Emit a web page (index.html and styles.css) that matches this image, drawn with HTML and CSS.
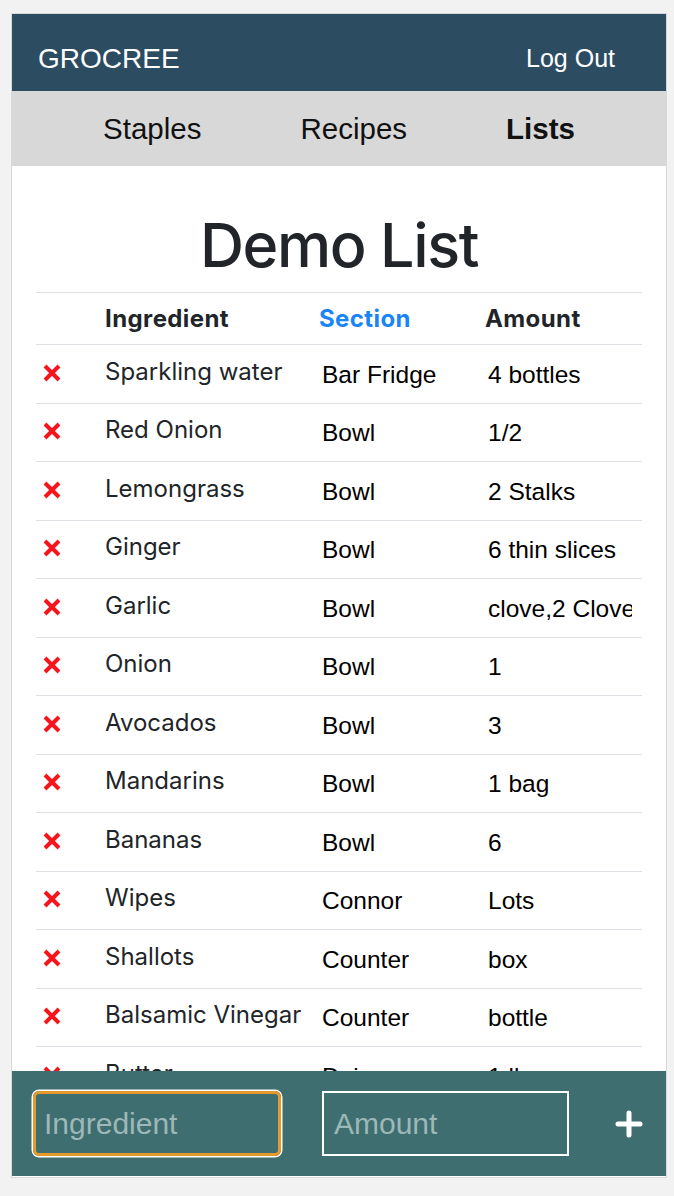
FILE: index.html
```html
<!DOCTYPE html>
<html lang="en">
<head>
<meta charset="utf-8">
<title>Grocree - Demo List</title>
<link rel="stylesheet" href="styles.css">
</head>
<body>
<div class="app">
  <header class="topbar">
    <span class="brand">GROCREE</span>
    <span class="logout">Log Out</span>
  </header>
  <nav class="tabs">
    <span class="tab">Staples</span>
    <span class="tab">Recipes</span>
    <span class="tab active">Lists</span>
  </nav>
  <main class="content">
    <h1 class="title">Demo List</h1>
    <table class="list">
      <colgroup>
        <col class="c-del"><col class="c-ing"><col class="c-sec"><col class="c-amt">
      </colgroup>
      <thead>
        <tr><th></th><th>Ingredient</th><th class="sorted">Section</th><th>Amount</th></tr>
      </thead>
      <tbody id="rows"></tbody>
    </table>
  </main>
  <footer class="addbar">
    <input class="field focused" type="text" placeholder="Ingredient">
    <input class="field" type="text" placeholder="Amount">
    <svg class="plus" width="28" height="28" viewBox="0 0 28 28"><path d="M14 3V25M3 14H25" stroke="#fff" stroke-width="5" stroke-linecap="round" fill="none"/></svg>
  </footer>
</div>
<script src="app.js"></script>
</body>
</html>
```
FILE: app.js
```js
const items = [
  ["Sparkling water", "Bar Fridge", "4 bottles"],
  ["Red Onion", "Bowl", "1/2"],
  ["Lemongrass", "Bowl", "2 Stalks"],
  ["Ginger", "Bowl", "6 thin slices"],
  ["Garlic", "Bowl", "clove,2 Cloves"],
  ["Onion", "Bowl", "1"],
  ["Avocados", "Bowl", "3"],
  ["Mandarins", "Bowl", "1 bag"],
  ["Bananas", "Bowl", "6"],
  ["Wipes", "Connor", "Lots"],
  ["Shallots", "Counter", "box"],
  ["Balsamic Vinegar", "Counter", "bottle"],
  ["Butter", "Dairy", "1 lb"]
];
const x = '<svg class="del" width="20" height="18" viewBox="0 0 20 18"><path d="M3 2L17 16M17 2L3 16" stroke="#f8141c" stroke-width="4" fill="none"/></svg>';
const tbody = document.getElementById("rows");
tbody.innerHTML = items.map(([i, s, a]) =>
  `<tr><td class="d">${x}</td><td class="ing">${i}</td><td><input class="cell" value="${s}"></td><td><input class="cell" value="${a}"></td></tr>`
).join("");
```
FILE: styles.css
```css
* { box-sizing: border-box; }
html, body { margin: 0; padding: 0; }
body {
  background: #f2f2f2;
  padding: 13px 0 0 11px;
  height: 1196px;
  overflow: hidden;
}
.app {
  width: 656px;
  height: 1165px;
  background: #fff;
  border: 1px solid #d9d9d9;
  display: flex;
  flex-direction: column;
  overflow: hidden;
}
.topbar {
  height: 77px;
  flex: none;
  background: #2c4c62;
  color: #fff;
  display: flex;
  align-items: center;
  justify-content: space-between;
  padding: 12px 51px 0 26px;
  font-family: "Liberation Sans", Arial, sans-serif;
}
.brand { font-size: 28px; }
.logout { font-size: 25px; }
.tabs {
  height: 75px;
  flex: none;
  background: #d8d8d8;
  display: flex;
  align-items: center;
  justify-content: center;
  gap: 99px;
  font-family: "Liberation Sans", Arial, sans-serif;
  font-size: 29.5px;
  color: #111;
  padding-top: 1px;
}
.tab.active { font-weight: bold; }
.content {
  flex: 1;
  min-height: 0;
  overflow: hidden;
  padding: 0 24px;
}
.title {
  margin: 35px 0 0;
  height: 91px;
  padding-bottom: 3px;
  text-align: center;
  font-family: Inter, "Noto Sans", sans-serif;
  font-weight: 500;
  font-size: 61px;
  letter-spacing: -1.4px;
  line-height: 88px;
  color: #212529;
}
.list {
  width: 100%;
  table-layout: fixed;
  border-collapse: collapse;
  font-family: Inter, "Noto Sans", sans-serif;
  color: #212529;
}
.c-del { width: 57px; }
.c-ing { width: 214px; }
.c-sec { width: 166px; }
.c-amt { width: 169px; }
.list th {
  height: 52px;
  text-align: left;
  font-size: 24px;
  letter-spacing: 0.4px;
  font-weight: 700;
  padding: 0 0 0 12px;
  border-top: 1px solid #dee2e6;
  border-bottom: 1px solid #dee2e6;
}
.list th.sorted { color: #1a84fb; }
.list td {
  height: 58.5px;
  border-bottom: 1px solid #dee2e6;
  padding: 0 0 0 12px;
  vertical-align: middle;
}
.list td.d { padding-left: 6px; }
.del { display: block; margin-top: -2px; }
.list td.ing {
  font-size: 24px;
  padding-bottom: 5px;
  white-space: nowrap;
}
.cell {
  display: block;
  width: 100%;
  border: none;
  background: transparent;
  padding: 0 10px 0 3px;
  margin-top: 2px;
  font-family: "Liberation Sans", Arial, sans-serif;
  font-size: 24.5px;
  color: #000;
  outline: none;
}
.addbar {
  height: 105px;
  flex: none;
  margin-bottom: 1px;
  background: #3f6e71;
  display: flex;
  align-items: center;
  padding: 0 0 0 21px;
}
.field {
  width: 247px;
  height: 65px;
  background: transparent;
  border: 2px solid #fff;
  color: #fff;
  font-family: "Liberation Sans", Arial, sans-serif;
  font-size: 30px;
  padding: 0 10px;
  outline: none;
}
.field.focused {
  width: 248px;
  border: 3px solid #e69a2e;
  border-radius: 6px;
  box-shadow: 0 0 0 1.5px #fff;
  padding: 0 8px;
  margin-right: 41px;
}
.field::placeholder { color: #9db8b8; opacity: 1; }
.plus { margin-left: 46px; }
```
